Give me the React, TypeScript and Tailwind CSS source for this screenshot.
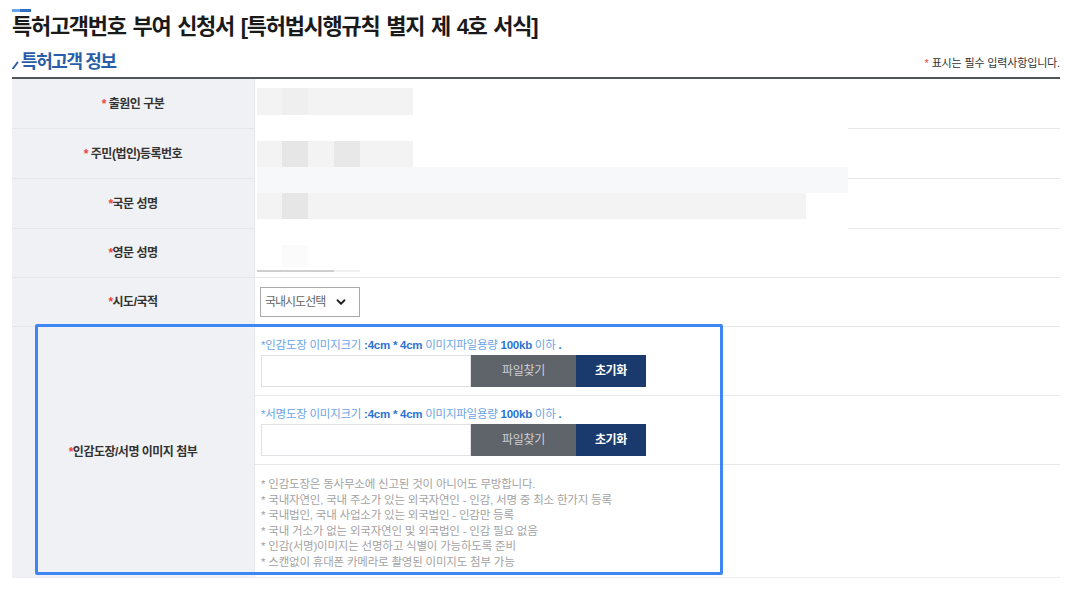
import { ChevronDown } from "lucide-react";

function Req() {
  return <span className="text-[#e8473e]">*</span>;
}

function Label({ children }: { children: React.ReactNode }) {
  return (
    <div className="w-[243px] shrink-0 bg-[#f0f1f4] border-r border-[#e5e7eb] flex items-center justify-center text-[12px] font-bold tracking-[-0.5px] text-[#333]">
      {children}
    </div>
  );
}

function FileRow({ kind }: { kind: string }) {
  return (
    <div className="pl-[6px] pt-[10px] pb-[8px] border-b border-[#e6e7eb]">
      <div className="h-[16px] leading-[16px] text-[11.5px] tracking-[-0.25px] text-[#6aa4e4] whitespace-nowrap">
        *{kind} 이미지크기 <span className="font-bold text-[#2d74d2]">:4cm * 4cm</span> 이미지파일용량{" "}
        <span className="font-bold text-[#2d74d2]">100kb</span> 이하 <span className="font-bold text-[#2d74d2]">.</span>
      </div>
      <div className="mt-[2px] flex h-[32px]">
        <div className="w-[210px] border border-[#dde1e6] bg-white" />
        <div className="w-[105px] bg-[#5f636a] text-[#cfd0d2] text-[12px] tracking-[-0.3px] flex items-center justify-center">
          파일찾기
        </div>
        <div className="w-[70px] bg-[#1a3a6e] text-white font-bold text-[12px] tracking-[-0.3px] flex items-center justify-center">
          초기화
        </div>
      </div>
    </div>
  );
}

const notes = [
  "* 인감도장은 동사무소에 신고된 것이 아니어도 무방합니다.",
  "* 국내자연인, 국내 주소가 있는 외국자연인 - 인감, 서명 중 최소 한가지 등록",
  "* 국내법인, 국내 사업소가 있는 외국법인 - 인감만 등록",
  "* 국내 거소가 없는 외국자연인 및 외국법인 - 인감 필요 없음",
  "* 인감(서명)이미지는 선명하고 식별이 가능하도록 준비",
  "* 스캔없이 휴대폰 카메라로 촬영된 이미지도 첨부 가능",
];

export default function App() {
  return (
    <div className="w-[1090px] h-[590px] bg-white overflow-hidden font-['Liberation_Sans','Noto_Sans_CJK_KR',sans-serif] text-[#333]">
      <div className="pl-[12px] w-[1060px] pt-[9px]">
        <div className="flex h-[3px] w-[19px]">
          <div className="w-[8px] bg-[#6aa6e8]" />
          <div className="flex-1 bg-[#2f6fc6]" />
        </div>
        <h1 className="mt-[2px] h-[26px] leading-[26px] text-[22px] font-bold tracking-[-1.3px] [word-spacing:2px] text-[#1a1a1a] whitespace-nowrap">
          특허고객번호 부여 신청서 [특허법시행규칙 별지 제 4호 서식]
        </h1>
        <div className="flex justify-between items-start h-[37px]">
          <div className="mt-[12px] flex items-center h-[20px]">
            <svg width="7" height="8" viewBox="0 0 7 8" className="mt-[6px] mr-[2px]">
              <path d="M1 7.5 L5.5 1.5" stroke="#2a5ea8" strokeWidth="2" strokeLinecap="round" />
            </svg>
            <span className="text-[18px] leading-[20px] font-bold tracking-[-1.4px] text-[#2a5ea8]">특허고객 정보</span>
          </div>
          <div className="mt-[15px] text-[11px] leading-[16px] tracking-[-0.15px] text-[#333]">
            <Req /> 표시는 필수 입력사항입니다.
          </div>
        </div>

        <div className="border-t-2 border-[#52565c]">
          <div className="relative">
            <div className="flex h-[50px] border-b border-[#e6e7eb]">
              <Label>
                <Req />&nbsp;출원인 구분
              </Label>
              <div className="flex-1" />
            </div>
            <div className="flex h-[50px] border-b border-[#e6e7eb]">
              <Label>
                <Req />&nbsp;주민(법인)등록번호
              </Label>
              <div className="flex-1" />
            </div>
            <div className="flex h-[50px] border-b border-[#e6e7eb]">
              <Label>
                <Req />국문 성명
              </Label>
              <div className="flex-1" />
            </div>
            <div className="flex h-[49px] border-b border-[#e6e7eb]">
              <Label>
                <Req />영문 성명
              </Label>
              <div className="flex-1" />
            </div>
            <div className="absolute left-[243px] top-0 w-[593px] h-[197px] bg-white">
              <div className="absolute left-[2px] top-[9px] w-[156px] h-[27px] bg-[#f3f3f3]">
                <div className="absolute left-[25px] top-0 w-[26px] h-full bg-[#efefef]" />
              </div>
              <div className="absolute left-[2px] top-[62px] w-[156px] h-[26px] bg-[#f3f3f3]">
                <div className="absolute left-[25px] top-0 w-[26px] h-full bg-[#e6e6e6]" />
                <div className="absolute left-[77px] top-0 w-[26px] h-full bg-[#e8e8e8]" />
              </div>
              <div className="absolute left-[2px] top-[88px] w-[591px] h-[26px] bg-[#f7f8fa]" />
              <div className="absolute left-[2px] top-[114px] w-[549px] h-[26px] bg-[#f3f3f3]">
                <div className="absolute left-[25px] top-0 w-[26px] h-full bg-[#e6e6e6]" />
              </div>
              <div className="absolute left-[27px] top-[166px] w-[26px] h-[22px] bg-[#fbfbfb]" />
              <div className="absolute left-[2px] top-[191px] w-[77px] h-[2px] bg-[#cfcfcf]" />
              <div className="absolute left-[79px] top-[191px] w-[26px] h-[2px] bg-[#efefef]" />
            </div>
          </div>

          <div className="flex h-[49px] border-b border-[#e6e7eb]">
            <Label>
              <Req />시도/국적
            </Label>
            <div className="flex-1 flex items-center pl-[5px]">
              <div className="w-[100px] h-[30px] border border-[#a9a9a9] flex items-center justify-between pl-[4px] pr-[11px] text-[12px] tracking-[-1px] text-[#666]">
                <span>국내시도선택</span>
                <ChevronDown size={14} strokeWidth={3.2} color="#222" />
              </div>
            </div>
          </div>

          <div className="relative flex h-[251px] border-b border-[#eceef1]">
            <Label>
              <Req />인감도장/서명 이미지 첨부
            </Label>
            <div className="flex-1 flex flex-col">
              <FileRow kind="인감도장" />
              <FileRow kind="서명도장" />
              <div className="pl-[6px] pt-[12px] text-[11.5px] leading-[15.6px] tracking-[-0.2px] text-[#a3a3a3] whitespace-nowrap">
                {notes.map((n) => (
                  <div key={n}>{n}</div>
                ))}
              </div>
            </div>
            <div className="absolute left-[23px] top-[-3px] w-[688px] h-[251px] border-[3px] border-[#3f86f4] rounded-[2px] pointer-events-none" />
          </div>
        </div>
      </div>
    </div>
  );
}
